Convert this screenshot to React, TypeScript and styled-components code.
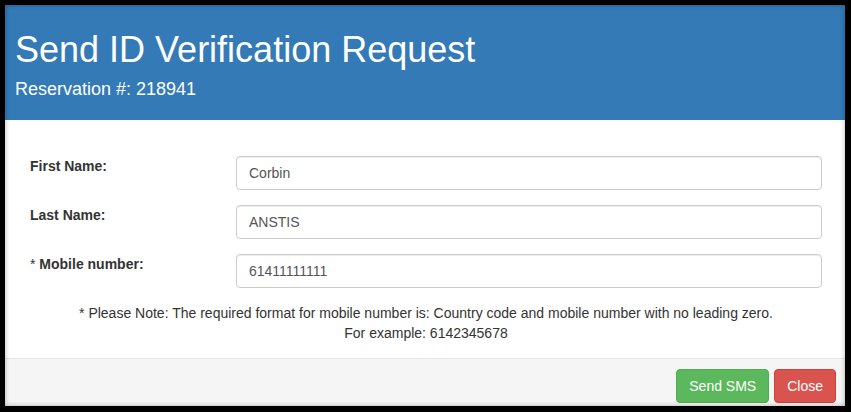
import React from 'react';
import styled, { createGlobalStyle } from 'styled-components';

const GlobalStyle = createGlobalStyle`
  html, body {
    margin: 0;
    padding: 0;
    background: #000;
    font-family: "Liberation Sans", Arial, Helvetica, sans-serif;
    overflow: hidden;
  }
  * {
    box-sizing: border-box;
  }
`;

const Frame = styled.div`
  width: 851px;
  height: 412px;
  padding: 5px 6px 6px 5px;
  background: #000;
`;

const Modal = styled.div`
  position: relative;
  display: flex;
  flex-direction: column;
  height: 401px;
  background: #fff;
  overflow: hidden;
  &::after {
    content: '';
    position: absolute;
    inset: 0;
    box-shadow: inset 0 0 5px rgba(0, 0, 0, 0.3);
    pointer-events: none;
  }
`;

const Header = styled.div`
  height: 115px;
  padding: 25px 10px 20px;
  background: #337ab7;
  color: #fff;
`;

const Title = styled.h1`
  margin: 0 0 10px;
  font-size: 36px;
  font-weight: 400;
  line-height: 1.1;
`;

const SubTitle = styled.h4`
  margin: 0;
  font-size: 18px;
  font-weight: 400;
  line-height: 1.1;
`;

const Body = styled.div`
  flex: 1;
  padding: 36px 23px 15px 25px;
  color: #333;
`;

const FormRow = styled.div`
  display: grid;
  grid-template-columns: 206px 1fr;
  margin-bottom: 15px;
`;

const Label = styled.label`
  font-size: 14px;
  font-weight: bold;
  line-height: 20px;
  color: #333;
`;

const Required = styled.span`
  font-weight: normal;
`;

const Input = styled.input`
  width: 100%;
  height: 34px;
  padding: 6px 12px;
  font-family: inherit;
  font-size: 14px;
  line-height: 20px;
  color: #555;
  background: #fff;
  border: 1px solid #ccc;
  border-radius: 4px;
  box-shadow: inset 0 1px 1px rgba(0, 0, 0, 0.075);
  outline: none;
`;

const Note = styled.p`
  margin: 0;
  font-size: 14px;
  line-height: 20px;
  text-align: center;
  color: #333;
`;

const Footer = styled.div`
  display: flex;
  justify-content: flex-end;
  gap: 5px;
  padding: 10px 9px 3px;
  background: #f5f5f5;
  border-top: 1px solid #e5e5e5;
`;

const Button = styled.button<{ $variant: 'success' | 'danger' }>`
  height: 34px;
  padding: 6px 12px;
  font-family: inherit;
  font-size: 14px;
  line-height: 20px;
  color: #fff;
  border-radius: 4px;
  cursor: pointer;
  background: ${(p) => (p.$variant === 'success' ? '#5cb85c' : '#d9534f')};
  border: 1px solid ${(p) => (p.$variant === 'success' ? '#4cae4c' : '#d43f3a')};
`;

const fields = [
  { label: 'First Name:', value: 'Corbin', required: false },
  { label: 'Last Name:', value: 'ANSTIS', required: false },
  { label: 'Mobile number:', value: '61411111111', required: true },
];

const App = () => {
  return (
    <>
      <GlobalStyle />
      <Frame>
        <Modal>
          <Header>
            <Title>Send ID Verification Request</Title>
            <SubTitle>Reservation #: 218941</SubTitle>
          </Header>
          <Body>
            {fields.map((f) => (
              <FormRow key={f.label}>
                <Label>
                  {f.required && <Required>* </Required>}
                  {f.label}
                </Label>
                <Input type="text" defaultValue={f.value} />
              </FormRow>
            ))}
            <Note>
              * Please Note: The required format for mobile number is: Country code and mobile number with no leading zero.
              <br />
              For example: 6142345678
            </Note>
          </Body>
          <Footer>
            <Button $variant="success">Send SMS</Button>
            <Button $variant="danger">Close</Button>
          </Footer>
        </Modal>
      </Frame>
    </>
  );
};

export default App;
